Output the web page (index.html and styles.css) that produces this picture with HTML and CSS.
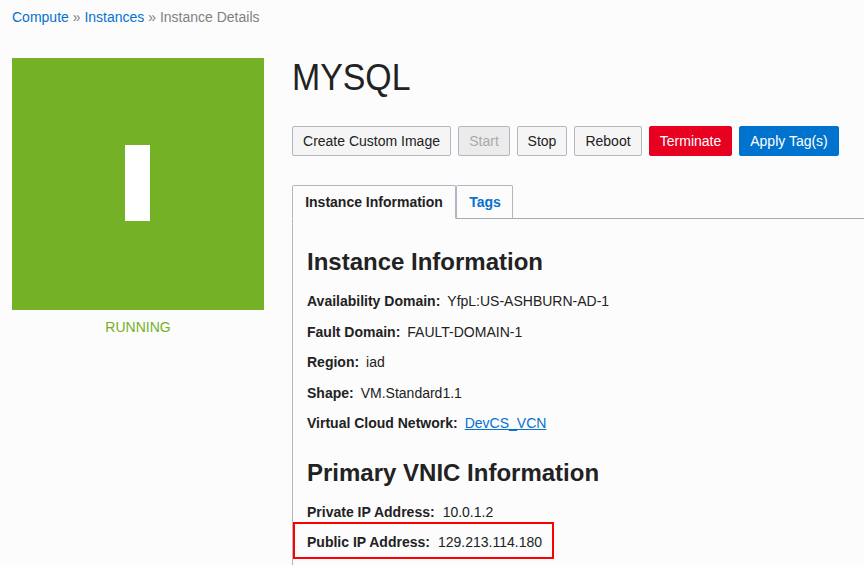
FILE: index.html
```html
<!DOCTYPE html>
<html lang="en">
<head>
<meta charset="utf-8">
<title>Instance Details</title>
<link rel="stylesheet" href="styles.css">
</head>
<body>
<nav class="crumbs"><a href="#">Compute</a> » <a href="#">Instances</a> » <span>Instance Details</span></nav>
<div class="layout">
  <aside class="status">
    <div class="tile"><div class="tile-mark"></div></div>
    <div class="state">RUNNING</div>
  </aside>
  <main class="main">
    <h1>MYSQL</h1>
    <div class="actions">
      <button class="btn w-image">Create Custom Image</button>
      <button class="btn w-start" disabled>Start</button>
      <button class="btn w-stop">Stop</button>
      <button class="btn w-reboot">Reboot</button>
      <button class="btn danger">Terminate</button>
      <button class="btn primary">Apply Tag(s)</button>
    </div>
    <div class="tabs">
      <div class="tab active">Instance Information</div>
      <div class="tab">Tags</div>
    </div>
    <div class="panel">
      <section>
        <h2>Instance Information</h2>
        <p><b>Availability Domain:</b><span>YfpL:US-ASHBURN-AD-1</span></p>
        <p><b>Fault Domain:</b><span>FAULT-DOMAIN-1</span></p>
        <p><b>Region:</b><span>iad</span></p>
        <p><b>Shape:</b><span>VM.Standard1.1</span></p>
        <p><b>Virtual Cloud Network:</b><a href="#">DevCS_VCN</a></p>
      </section>
      <section>
        <h2>Primary VNIC Information</h2>
        <p class="private"><b>Private IP Address:</b><span>10.0.1.2</span></p>
        <p class="marked"><b>Public IP Address:</b><span>129.213.114.180</span></p>
      </section>
    </div>
  </main>
</div>
</body>
</html>
```
FILE: styles.css
```css
* { box-sizing: border-box; }
body { margin: 0; height: 565px; overflow: hidden; background: #fcfcfc; color: #222; font: 14px/20px "Liberation Sans", Arial, sans-serif; }
a { color: #0572ce; }
.crumbs { padding: 7px 12px 0; height: 58px; color: #818181; }
.crumbs a { text-decoration: none; }
.layout { display: flex; gap: 28px; height: 507px; padding-left: 12px; }
.status { width: 252px; flex: none; }
.tile { height: 252px; background: #74b126; display: flex; align-items: center; justify-content: center; }
.tile-mark { width: 24.6px; height: 76px; margin: 0 1px 2px 0; background: #fff; }
.state { margin-top: 7px; text-align: center; color: #74b126; }
.main { flex: 1; min-width: 0; display: flex; flex-direction: column; }
h1 { flex: none; margin: 0; height: 68px; font-size: 36px; line-height: 40px; font-weight: 400; transform: scaleX(.94); transform-origin: left; }
.actions { flex: none; display: flex; gap: 7px; height: 59px; }
.btn { height: 30px; padding: 0; border: 1px solid #b2b6c0; border-radius: 2px; background: #f5f5f5; color: #222; font: inherit; white-space: nowrap; }
.btn:disabled { background: #ebebeb; color: #aaa; }
.w-image { width: 159px; }
.w-start { width: 52px; }
.w-stop { width: 50px; }
.w-reboot { width: 68px; }
.danger { width: 83px; background: #e80020; border-color: #e80020; color: #fff; }
.primary { width: 100px; background: #0073cf; border-color: #0073cf; color: #fff; }
.tabs { flex: none; display: flex; height: 34px; border-bottom: 1px solid #a9a9ab; }
.tab { width: 57px; height: 34px; border: 1px solid #b2b6c0; border-bottom-color: #a9a9ab; border-radius: 2px 2px 0 0; padding-left: 1px; text-align: center; line-height: 33px; font-weight: 700; color: #0572ce; }
.tab.active { width: 164px; padding: 0; border-bottom-color: #fcfcfc; background: #fcfcfc; color: #222; }
.panel { flex: 1; min-height: 0; border-left: 1px solid #b2b6c0; padding: 28px 0 0 14px; }
h2 { margin: 0 0 14px; font-size: 24px; line-height: 30px; }
p { margin: 0 0 10.5px; line-height: 20px; }
p b { margin-right: 7px; }
section + section { margin-top: 25px; }
.private, .marked { margin-bottom: 0; }
.private b, .marked b { margin-right: 8px; }
.marked { width: 261px; height: 37px; margin-left: -14px; padding: 8px 0 0 12px; border: 2px solid #f00; }
```
